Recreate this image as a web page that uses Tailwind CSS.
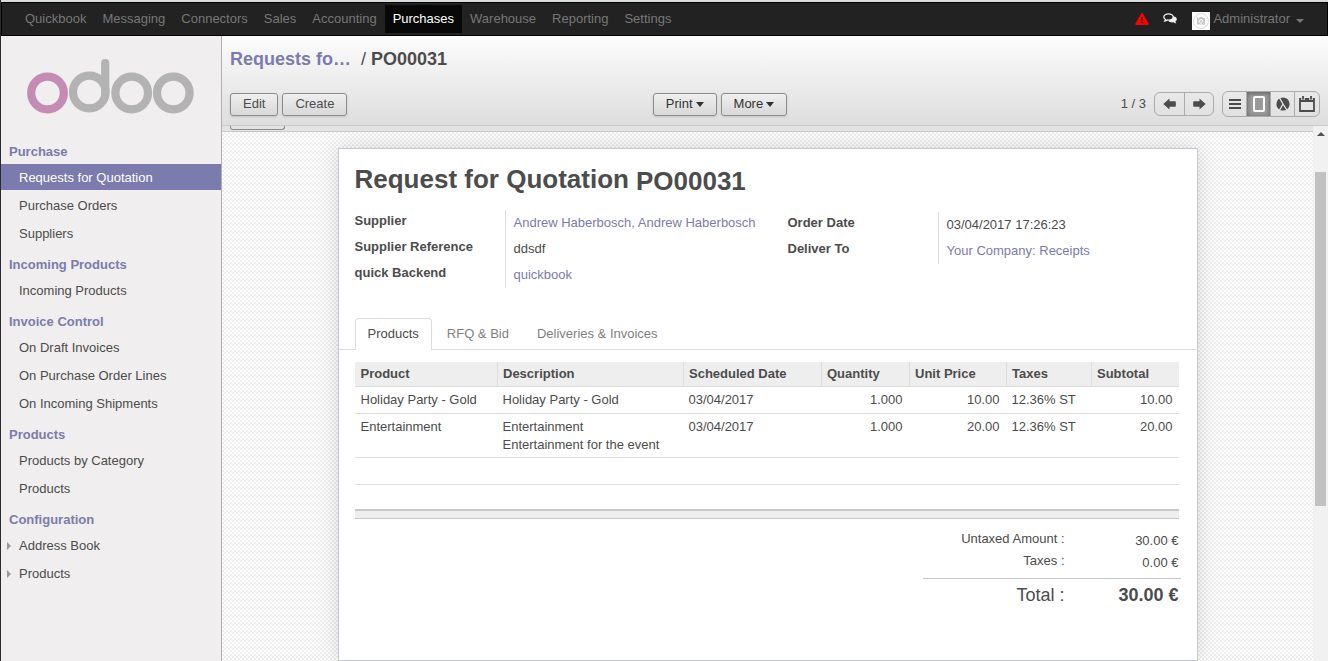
<!DOCTYPE html>
<html lang="en">
<head>
<meta charset="utf-8">
<meta name="viewport" content="width=device-width, initial-scale=1">
<title>PO00031 - Odoo</title>
<script src="https://cdn.jsdelivr.net/npm/@tailwindcss/browser@4"></script>
</head>
<body class="flex h-screen flex-col overflow-hidden border-l border-[#2b2b2f] bg-white font-['Liberation_Sans',Arial,sans-serif] text-[13px] leading-[18px] text-[#4c4c4c]">
<div class="h-[2px] shrink-0 bg-[#d8dcdc]"></div>
<nav class="flex h-[34px] shrink-0 items-center border border-black bg-[#222] pl-[15px] pr-[23px] text-[#777]">
  <a href="#" class="px-2 py-[5px]">Quickbook</a>
  <a href="#" class="px-2 py-[5px]">Messaging</a>
  <a href="#" class="px-2 py-[5px]">Connectors</a>
  <a href="#" class="px-2 py-[5px]">Sales</a>
  <a href="#" class="px-2 py-[5px]">Accounting</a>
  <a href="#" class="bg-[#080808] px-2 py-[5px] text-white">Purchases</a>
  <a href="#" class="px-2 py-[5px]">Warehouse</a>
  <a href="#" class="px-2 py-[5px]">Reporting</a>
  <a href="#" class="px-2 py-[5px]">Settings</a>
  <div class="ml-auto flex items-center">
    <button type="button" aria-label="Warnings" class="mr-[14px]">
      <svg width="14" height="12" viewBox="0 0 14 12" class="block"><path d="M6.2.6a.9.9 0 0 1 1.6 0l5.8 10a.9.9 0 0 1-.8 1.4H1.200a.9.9 0 0 1-.8-1.400z" fill="#f00"/><path d="M6 4h2l-.3 3.500H6.300zM6 8.500h2v1.700H6z" fill="#222"/></svg>
    </button>
    <button type="button" aria-label="Messages" class="mr-[15px]">
      <svg width="14" height="12" viewBox="0 0 14 12" class="block"><path d="M10.500 3.200c2 .4 3.300 1.600 3.300 3 0 1-.6 1.800-1.500 2.400.2.700.6 1.100 1.200 1.700-1.300 0-2.200-.4-2.900-1-1.800.3-3.800 0-5-1" fill="#eee"/><path d="M5.500.8C2.900.8.8 2.200.8 4c0 1 .7 1.900 1.800 2.500-.1.600-.4 1-.8 1.500 1.100-.1 1.900-.5 2.500-1 .4.100.8.100 1.200.1 2.600 0 4.700-1.400 4.700-3.100S8.100.8 5.500.8z" fill="#222" stroke="#eee" stroke-width="1.300"/></svg>
    </button>
    <button type="button" class="flex items-center">
      <svg width="18" height="18" viewBox="0 0 18 18" class="mr-[3px] mt-1"><path d="M0 0h18v18H0z" fill="#fff"/><circle cx="9" cy="9" r="7.500" fill="none" stroke="#ddd"/><path d="M5 6h2l1-1h2l1 1h2v6.500H5z" fill="#c4c4c4"/><circle cx="9" cy="9.200" r="1.900" fill="#c4c4c4" stroke="#fff"/><path d="M4 4l10 10" stroke="#ddd"/></svg>
      <span>Administrator</span>
      <span class="ml-1.5 mt-1 border-x-4 border-t-4 border-x-transparent border-t-[#777]"></span>
    </button>
  </div>
</nav>
<div class="flex min-h-0 flex-1">
  <aside class="w-[221px] shrink-0 border-r border-[#afafb6] bg-[#f0eeee]">
    <svg width="168" height="55" viewBox="0 0 168 55" fill="none" stroke="#b3b3b3" stroke-width="8.200" class="mb-7 ml-[26px] mt-[23px] block" role="img" aria-label="odoo">
      <circle cx="20.500" cy="34" r="16.300" stroke="#c48cb4"/><circle cx="62.300" cy="33" r="16.300"/><circle cx="104.700" cy="34" r="16.300"/><circle cx="146.300" cy="34" r="16.300"/><path d="M78.200 4.200V33" stroke-linecap="round"/>
    </svg>
    <h2 class="px-2 pb-[3px] pt-px font-bold text-[#7c7bad]">Purchase</h2>
    <ul class="mb-2.5">
      <li><a href="#" class="block bg-[#7c7bad] pb-[3px] pl-[18px] pt-[5px] text-white">Requests for Quotation</a></li>
      <li><a href="#" class="mt-0.5 block pb-[3px] pl-[18px] pt-[5px]">Purchase Orders</a></li>
      <li><a href="#" class="mt-0.5 block pb-[3px] pl-[18px] pt-[5px]">Suppliers</a></li>
    </ul>
    <h2 class="px-2 pb-1 font-bold text-[#7c7bad]">Incoming Products</h2>
    <ul class="mb-[9px]">
      <li><a href="#" class="block py-1 pl-[18px]">Incoming Products</a></li>
    </ul>
    <h2 class="px-2 pb-1 font-bold text-[#7c7bad]">Invoice Control</h2>
    <ul class="mb-[9px]">
      <li><a href="#" class="block py-1 pl-[18px]">On Draft Invoices</a></li>
      <li><a href="#" class="mt-0.5 block py-1 pl-[18px]">On Purchase Order Lines</a></li>
      <li><a href="#" class="mt-0.5 block py-1 pl-[18px]">On Incoming Shipments</a></li>
    </ul>
    <h2 class="px-2 pb-1 font-bold text-[#7c7bad]">Products</h2>
    <ul class="mb-[9px]">
      <li><a href="#" class="block py-1 pl-[18px]">Products by Category</a></li>
      <li><a href="#" class="mt-0.5 block py-1 pl-[18px]">Products</a></li>
    </ul>
    <h2 class="px-2 pb-1 font-bold text-[#7c7bad]">Configuration</h2>
    <ul>
      <li><a href="#" class="flex items-center gap-2 py-1 pl-1.5"><span class="border-y-4 border-l-4 border-y-transparent border-l-[#999]"></span>Address Book</a></li>
      <li><a href="#" class="mt-0.5 flex items-center gap-2 py-1 pl-1.5"><span class="border-y-4 border-l-4 border-y-transparent border-l-[#999]"></span>Products</a></li>
    </ul>
  </aside>
  <main class="flex min-w-0 flex-1 flex-col">
    <header class="shrink-0 border-b border-[#cacaca] bg-linear-to-b from-[#fcfcfc] to-[#dedede] px-2 pb-2 pt-[11px]">
      <h1 class="flex text-lg leading-6 font-bold"><a href="#" class="w-[131px] text-[#7c7bad]">Requests fo…</a><span class="mr-[5px] font-normal">/</span>PO00031</h1>
      <div class="mt-5 flex items-center justify-between">
        <div class="flex flex-1 gap-1">
          <button type="button" class="h-[23px] rounded-[3px] border border-[#8c8c8c] bg-linear-to-b from-[#efefef] to-[#d8d8d8] px-3 shadow-sm">Edit</button>
          <button type="button" class="h-[23px] rounded-[3px] border border-[#8c8c8c] bg-linear-to-b from-[#efefef] to-[#d8d8d8] px-3 shadow-sm">Create</button>
        </div>
        <div class="flex gap-1 pr-[110px] text-[#333]">
          <button type="button" class="flex h-[23px] items-center gap-[3px] rounded-[3px] border border-[#8c8c8c] bg-linear-to-b from-[#efefef] to-[#d8d8d8] px-3 shadow-sm">Print<span class="border-x-4 border-t-5 border-x-transparent border-t-[#333]"></span></button>
          <button type="button" class="flex h-[23px] items-center gap-[3px] rounded-[3px] border border-[#8c8c8c] bg-linear-to-b from-[#efefef] to-[#d8d8d8] px-3 shadow-sm">More<span class="border-x-4 border-t-5 border-x-transparent border-t-[#333]"></span></button>
        </div>
        <div class="flex flex-1 items-center justify-end">
          <span class="mr-2">1 / 3</span>
          <div class="mr-2 flex h-6 overflow-hidden rounded-[6px] border border-[#ababab]">
            <button type="button" aria-label="Previous" class="flex w-[30px] items-center justify-center border-r border-[#ababab]"><svg width="13" height="12" viewBox="0 0 13 12"><path d="M.3 6L6.500.5v2.700H12q.8 0 .8.800v4q0 .8-.8.800H6.500v2.700z" fill="#4c4c4c"/></svg></button>
            <button type="button" aria-label="Next" class="flex w-7 items-center justify-center"><svg width="13" height="12" viewBox="0 0 13 12"><path d="M12.700 6L6.500.5v2.700H1q-.8 0-.8.800v4q0 .8.800.800h5.500v2.700z" fill="#4c4c4c"/></svg></button>
          </div>
          <div class="flex h-[26px] overflow-hidden rounded-[6px] border border-[#ababab]">
            <button type="button" aria-label="List" class="flex w-6 items-center justify-center border-r border-[#ababab]"><svg width="12" height="10" viewBox="0 0 12 10"><path d="M0 1h12M0 5h12M0 9h12" stroke="#4c4c4c" stroke-width="2"/></svg></button>
            <button type="button" aria-label="Form" class="flex w-6 items-center justify-center border-r border-[#ababab] bg-[#999] shadow-[inset_0_1px_4px_rgba(0,0,0,0.4)]"><svg width="12" height="16" viewBox="0 0 12 16"><rect x="1" y="1" width="10" height="14" rx="1" fill="none" stroke="#fff" stroke-width="2"/></svg></button>
            <button type="button" aria-label="Graph" class="flex w-6 items-center justify-center border-r border-[#ababab]"><svg width="14" height="14" viewBox="0 0 14 14"><circle cx="7" cy="7" r="6.600" fill="#4c4c4c"/><path d="M3 0l4 7-4 7M7 7l4.500 7" fill="none" stroke="#e6e6e6" stroke-width="1.300"/></svg></button>
            <button type="button" aria-label="Calendar" class="flex w-6 items-center justify-center"><svg width="16" height="16" viewBox="0 0 16 16"><path d="M1 3h14v12H1z" fill="none" stroke="#4c4c4c" stroke-width="1.800"/><path d="M1 3h14v3H1z" fill="#4c4c4c"/><path d="M4 0v4M12 0v4" stroke="#e6e6e6" stroke-width="3.600"/><path d="M4 0v3.500M12 0v3.500" stroke="#4c4c4c" stroke-width="1.800"/></svg></button>
          </div>
        </div>
      </div>
    </header>
    <div class="flex min-h-0 flex-1">
      <div class="flex min-w-0 flex-1 flex-col">
        <div class="h-1.5 shrink-0 border-b border-[#cacaca] bg-[#e3e3e3] pl-2"><div class="h-1 w-[55px] rounded-b-[3px] border border-t-0 border-[#8c8c8c]"></div></div>
        <div class="flex flex-1 flex-col items-center overflow-hidden bg-[repeating-conic-gradient(#eeeeee_0_25%,#fff_0_50%)] bg-[length:4px_4px] px-4 pt-4">
          <article class="flex w-full max-w-[860px] flex-1 flex-col border border-[#c8c8d3] bg-white shadow-[0_0_20px_rgba(0,0,0,0.15)]">
            <h2 class="flex gap-[7px] px-4 pt-[15px] text-[26px] leading-[30px] font-bold">Request for Quotation <span class="mt-0.5">PO00031</span></h2>
            <div class="mt-3.5 flex px-4 leading-[26px]">
              <div class="flex w-[433px]">
                <dl class="grid w-full grid-cols-[150px_1fr]">
                  <dt class="-mt-0.5 font-bold">Supplier</dt><dd class="border-l border-[#ddd] pl-2"><a href="#" class="text-[#7c7bad]">Andrew Haberbosch, Andrew Haberbosch</a></dd>
                  <dt class="-mt-0.5 font-bold">Supplier Reference</dt><dd class="border-l border-[#ddd] pl-2">ddsdf</dd>
                  <dt class="-mt-0.5 font-bold">quick Backend</dt><dd class="border-l border-[#ddd] pl-2"><a href="#" class="text-[#7c7bad]">quickbook</a></dd>
                </dl>
              </div>
              <dl class="mt-0.5 grid flex-1 grid-cols-[150px_1fr] self-start">
                <dt class="-mt-0.5 font-bold">Order Date</dt><dd class="border-l border-[#ddd] pl-2">03/04/2017 17:26:23</dd>
                <dt class="-mt-0.5 font-bold">Deliver To</dt><dd class="border-l border-[#ddd] pl-2"><a href="#" class="text-[#7c7bad]">Your Company: Receipts</a></dd>
              </dl>
            </div>
            <div class="mt-[30px] flex border-b border-[#ddd] px-4 text-[#7f7f7f]" role="tablist">
              <button type="button" role="tab" aria-selected="true" class="-mb-px mr-0.5 rounded-t border border-b-0 border-[#ddd] bg-white px-3 pb-[7px] pt-1.5 text-[#4c4c4c]">Products</button>
              <button type="button" role="tab" class="mr-0.5 px-[13px] py-1.5">RFQ &amp; Bid</button>
              <button type="button" role="tab" class="px-[13px] py-1.5">Deliveries &amp; Invoices</button>
            </div>
            <div class="px-4 pr-[18px] pt-3">
              <table class="w-full table-fixed border-collapse">
                <colgroup><col class="w-[143px]"><col class="w-[186px]"><col class="w-[138px]"><col class="w-[88px]"><col class="w-[97px]"><col class="w-[85px]"><col></colgroup>
                <thead class="bg-[#eee] text-left">
                  <tr class="h-6 border-b border-[#ddd]"><th class="border-r border-[#ddd] px-1.5">Product</th><th class="border-r border-[#ddd] px-[5px]">Description</th><th class="border-r border-[#ddd] px-[5px]">Scheduled Date</th><th class="border-r border-[#ddd] px-[5px]">Quantity</th><th class="border-r border-[#ddd] px-[5px]">Unit Price</th><th class="border-r border-[#ddd] px-[5px]">Taxes</th><th class="px-[5px]">Subtotal</th></tr>
                </thead>
                <tbody class="align-top">
                  <tr class="border-b border-[#ddd]"><td class="px-1.5 py-1">Holiday Party - Gold</td><td class="px-[5px] py-1">Holiday Party - Gold</td><td class="px-[5px] py-1">03/04/2017</td><td class="px-[7px] py-1 text-right">1.000</td><td class="px-[7px] py-1 text-right">10.00</td><td class="px-[5px] py-1">12.36% ST</td><td class="px-1.5 py-1 text-right">10.00</td></tr>
                  <tr class="border-b border-[#ddd]"><td class="px-1.5 py-1">Entertainment</td><td class="px-[5px] pb-[3px] pt-1">Entertainment<br>Entertainment for the event</td><td class="px-[5px] py-1">03/04/2017</td><td class="px-[7px] py-1 text-right">1.000</td><td class="px-[7px] py-1 text-right">20.00</td><td class="px-[5px] py-1">12.36% ST</td><td class="px-1.5 py-1 text-right">20.00</td></tr>
                  <tr class="h-[27px] border-b border-[#ddd]"><td colspan="7"></td></tr>
                  <tr class="h-[26px]"><td colspan="7"></td></tr>
                </tbody>
                <tfoot><tr class="h-2 border-b border-t-2 border-[#c8c8c8] bg-[#eee]"><td colspan="7"></td></tr></tfoot>
              </table>
              <dl class="-mr-0.5 ml-auto mt-[9px] grid w-[258px] grid-cols-[142px_1fr] text-right leading-[22px]">
                <dt>Untaxed Amount :</dt><dd class="mt-0.5 pr-0.5">30.00 €</dd>
                <dt class="-mt-0.5">Taxes :</dt><dd class="pr-0.5">0.00 €</dd>
                <dt class="mt-1 border-t border-[#c8c8c8] pt-[5px] text-lg leading-[22px]">Total :</dt><dd class="mt-1 border-t border-[#c8c8c8] pr-0.5 pt-[5px] text-lg leading-[22px] font-bold">30.00 €</dd>
              </dl>
            </div>
          </article>
        </div>
      </div>
      <div class="flex w-[15px] shrink-0 flex-col items-center bg-[#f1f1f1] pt-1.5" aria-hidden="true">
        <span class="border-x-4 border-b-4 border-x-transparent border-b-[#505050]"></span>
        <span class="mt-9 h-[334px] w-[11px] bg-[#c1c1c1]"></span>
      </div>
    </div>
  </main>
</div>
</body>
</html>
